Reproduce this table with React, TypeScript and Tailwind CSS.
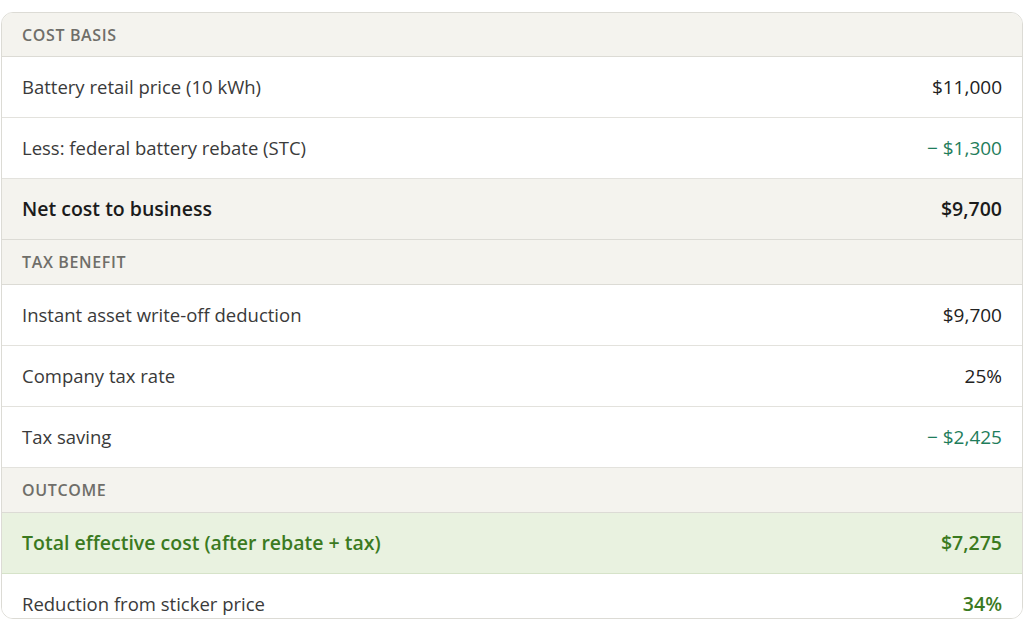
import { FC } from "react";

type Row =
  | { kind: "section"; label: string }
  | { kind: "line"; label: string; value: string; tone?: "credit" | "good" | "total" | "outcome" };

const rows: Row[] = [
  { kind: "section", label: "Cost basis" },
  { kind: "line", label: "Battery retail price (10 kWh)", value: "$11,000" },
  { kind: "line", label: "Less: federal battery rebate (STC)", value: "\u2212 $1,300", tone: "credit" },
  { kind: "line", label: "Net cost to business", value: "$9,700", tone: "total" },
  { kind: "section", label: "Tax benefit" },
  { kind: "line", label: "Instant asset write-off deduction", value: "$9,700" },
  { kind: "line", label: "Company tax rate", value: "25%" },
  { kind: "line", label: "Tax saving", value: "\u2212 $2,425", tone: "credit" },
  { kind: "section", label: "Outcome" },
  { kind: "line", label: "Total effective cost (after rebate + tax)", value: "$7,275", tone: "outcome" },
  { kind: "line", label: "Reduction from sticker price", value: "34%", tone: "good" },
];

const Section: FC<{ label: string; first?: boolean }> = ({ label, first }) => (
  <div
    className={
      first
        ? "flex h-[44px] shrink-0 items-center border-b border-[#dcdbd5] bg-[#f4f3ee] pl-5"
        : "flex h-[45px] shrink-0 items-center border-b border-[#dcdbd5] bg-[#f4f3ee] pl-5"
    }
  >
    <span className="text-[16px] font-semibold uppercase tracking-[0.04em] text-[#6f6e69]">{label}</span>
  </div>
);

export default function App() {
  return (
    <div className="min-h-[630px] bg-white px-px pt-3 font-['Open_Sans',sans-serif]">
      <div className="flex h-[607px] flex-col overflow-hidden rounded-xl border border-[#dcdbd5] bg-white">
        {rows.map((row, i) => {
          if (row.kind === "section") return <Section key={i} label={row.label} first={i === 0} />;
          const tone = row.tone;
          return (
            <div
              key={i}
              className={
                tone === "total"
                  ? "flex h-[61px] shrink-0 items-center justify-between border-b border-[#dcdbd5] bg-[#f4f3ee] pl-5 pr-5"
                  : tone === "outcome"
                    ? "flex h-[61px] shrink-0 items-center justify-between border-b border-[#d6e3c9] bg-[#e9f2e0] pl-5 pr-5"
                    : "flex h-[61px] shrink-0 items-center justify-between border-b border-[#e3e2dd] bg-white pl-5 pr-5"
              }
            >
              <span
                className={
                  tone === "total"
                    ? "text-[19.5px] font-semibold text-[#1b1b1b]"
                    : tone === "outcome"
                      ? "text-[19.5px] font-semibold text-[#3b7a1f]"
                      : "text-[18.5px] text-[#3a3a3a]"
                }
              >
                {row.label}
              </span>
              <span
                className={
                  tone === "credit"
                    ? "text-[19px] text-[#1f7d5b]"
                    : tone === "total"
                      ? "text-[19.5px] font-semibold text-[#1b1b1b]"
                      : tone === "outcome" || tone === "good"
                        ? "text-[19.5px] font-semibold text-[#3b7a1f]"
                        : "text-[19px] text-[#222222]"
                }
              >
                {row.value}
              </span>
            </div>
          );
        })}
      </div>
    </div>
  );
}
